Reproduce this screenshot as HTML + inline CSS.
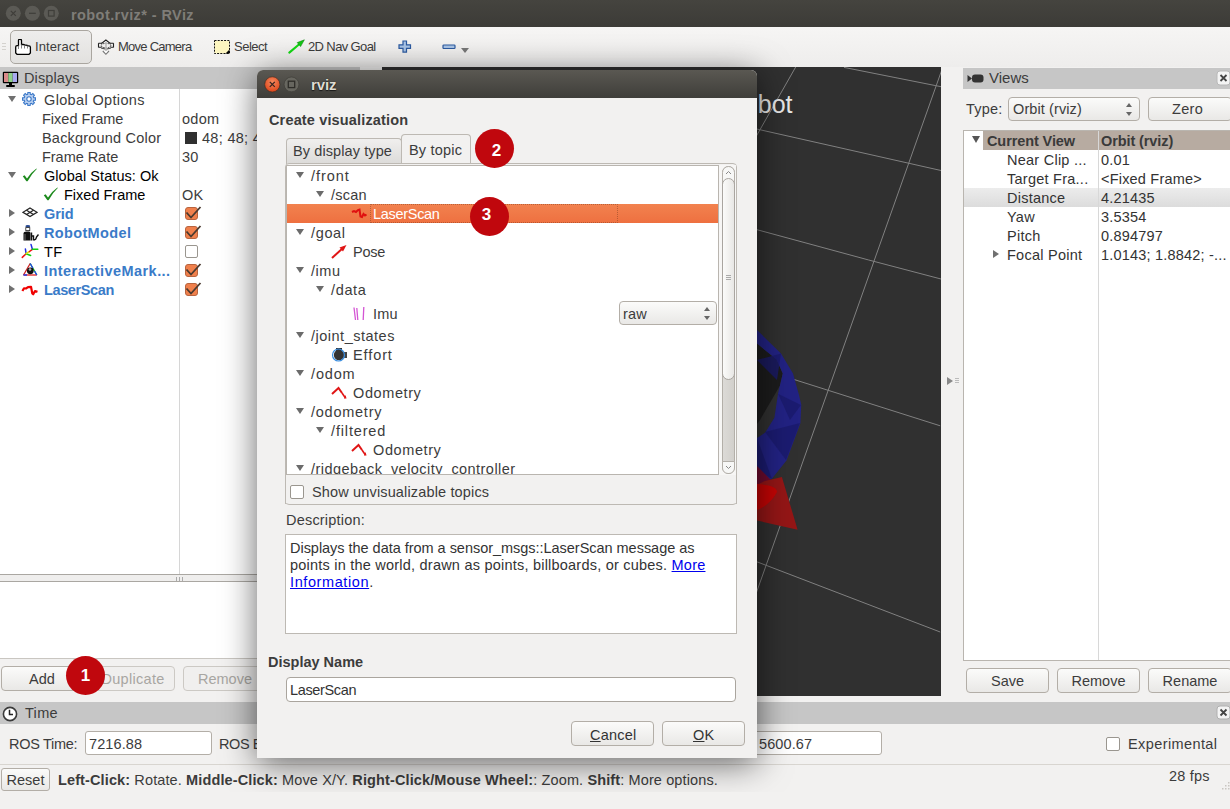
<!DOCTYPE html>
<html><head><meta charset="utf-8">
<style>
*{margin:0;padding:0;box-sizing:border-box}
html,body{width:1230px;height:809px;overflow:hidden;background:#f2f1f0;font-family:"Liberation Sans",sans-serif;font-size:13.5px;color:#3c3c3c;position:relative}
.a{position:absolute}
.t{position:absolute;white-space:nowrap;line-height:22px}
.b{font-weight:bold}
#titlebar{left:0;top:0;width:1230px;height:27px;background:linear-gradient(#45443f,#3c3b37)}
.wbtn{position:absolute;top:6px;width:15px;height:15px;border-radius:50%;background:#5f5e59}
#toolbar{left:0;top:27px;width:1230px;height:40px;background:linear-gradient(#f6f5f4,#eeedec)}
.phdr{background:#c6c6c6}
.tri{position:absolute;width:0;height:0;border-left:4px solid transparent;border-right:4px solid transparent;border-top:6px solid #707070}
.trir{position:absolute;width:0;height:0;border-top:4px solid transparent;border-bottom:4px solid transparent;border-left:6px solid #707070}
.btn{position:absolute;border:1px solid #b3aea7;border-radius:4px;background:linear-gradient(#fbfbfa,#e9e8e6);text-align:center;line-height:24px}
.inp{position:absolute;border:1px solid #b3aea7;border-radius:3px;background:#fff}
.cb{position:absolute;width:13px;height:13px;border:1px solid #9a968f;border-radius:2px;background:#fff}
.cbon{background:#f0804c;border-color:#b8643f;border-radius:3px}
.badge{position:absolute;width:39px;height:39px;border-radius:50%;background:#c0070d;color:#fff;font-size:17px;font-weight:bold;text-align:center;line-height:39px}
.blue{color:#2f76c4;font-weight:bold}
</style></head><body>

<!-- title bar -->
<div id="titlebar" class="a">
  <svg class="a" style="left:0;top:0" width="64" height="27" viewBox="0 0 64 27"><g fill="#5b5a55"><circle cx="13.3" cy="13.3" r="7.5"/><circle cx="32.4" cy="13.3" r="7.5"/><circle cx="51.3" cy="13.3" r="7.5"/></g><g stroke="#3f3e3a" stroke-width="1.2" fill="none"><path d="M10.8 10.8 L15.8 15.8 M15.8 10.8 L10.8 15.8"/><path d="M29 13.3 H35.8"/><rect x="48.5" y="10.5" width="5.6" height="5.6"/></g></svg>
  <div class="t b" style="left:71px;top:4px;color:#7f7d78;font-size:14.5px;letter-spacing:0.42px">robot.rviz* - RViz</div>
</div>

<!-- toolbar -->
<div id="toolbar" class="a">
  <div class="a" style="left:2px;top:16px;width:4px;height:1px;background:#d4d2ce;box-shadow:0 3px 0 #d4d2ce,0 6px 0 #d4d2ce"></div>
  <div class="a" style="left:10px;top:3px;width:82px;height:34px;border:1px solid #aaa6a0;border-radius:5px;background:linear-gradient(#eeedec,#e2e1df)"></div>
  <svg class="a" style="left:15px;top:12px" width="17" height="17" viewBox="0 0 17 17"><path d="M2 15.3 L0.7 14 V8 Q0.7 6.6 2 6.6 H3.5 V1.5 Q3.5 0.3 5 0.3 Q6.5 0.3 6.5 1.5 V5.5 H8 Q9.5 5.5 9.5 6.2 H11 Q12.5 6.2 12.5 6.8 H14 Q15.4 6.8 15.4 8.2 V14 L14 15.3 Z" fill="#fff" stroke="#000" stroke-width="1.3"/><path d="M6.5 5.5 V9.5 M9.5 6.2 V9.5 M12.5 6.8 V9.5 M3.5 6.6 V10" stroke="#777" stroke-width="0.9"/></svg>
  <div class="t" style="left:35px;top:9px;font-size:13px;letter-spacing:0.1px">Interact</div>
  <svg class="a" style="left:94px;top:9px" width="24" height="24" viewBox="94 36 24 24"><path d="M101.5 43.5 L105.9 40 L110.3 43.5" fill="#fff" stroke="#222" stroke-width="1.1"/><path d="M98.5 43.3 V47.5 M98.5 43.3 H102 M98.5 47.3 H101.5 M113.5 43.3 V47.5 M113.5 43.3 H110 M113.5 47.3 H110.5" stroke="#222" stroke-width="1.1" fill="none"/><ellipse cx="106" cy="45.6" rx="4.8" ry="2.3" fill="none" stroke="#333" stroke-width="1" stroke-dasharray="1.5 0.8"/><path d="M101 48 Q106 50.5 111 48" fill="none" stroke="#444" stroke-width="1"/><path d="M106 42 V51" stroke="#bbb" stroke-width="1.6"/><path d="M102.8 51 L105.9 54.3 L109 51" fill="#fff" stroke="#777" stroke-width="1.1"/></svg>
  <div class="t" style="left:118px;top:9px;font-size:13px;letter-spacing:-0.75px">Move Camera</div>
  <svg class="a" style="left:214px;top:13px" width="16" height="14" viewBox="0 0 16 14"><rect x="0.5" y="0.5" width="15" height="13" fill="#fdf6c0" stroke="#111" stroke-width="1" stroke-dasharray="2 1.2"/><path d="M15.5 9.5 V13.5 H11.5 Z" fill="#000"/></svg>
  <div class="t" style="left:234px;top:9px;font-size:13px;letter-spacing:-0.5px">Select</div>
  <svg class="a" style="left:288px;top:12px" width="17" height="15" viewBox="0 0 17 15"><path d="M1.3 13.6 L11.5 5" stroke="#14d814" stroke-width="2.1" stroke-linecap="round"/><path d="M16.4 0.8 L9.2 3.6 L12.6 7.6 Z" fill="#14c814" stroke="#0b7a0b" stroke-width="0.5"/></svg>
  <div class="t" style="left:308px;top:9px;font-size:13px;letter-spacing:-0.62px">2D Nav Goal</div>
  <svg class="a" style="left:398px;top:13px" width="14" height="13" viewBox="0 0 14 13"><path d="M5 1 h3.5 v3.8 h4 v3.5 h-4 v3.8 h-3.5 v-3.8 h-4 v-3.5 h4 z" fill="#a9c4e6" stroke="#2c5aa0" stroke-width="1.2"/></svg>
  <svg class="a" style="left:442px;top:17px" width="14" height="6" viewBox="0 0 14 6"><rect x="1" y="1" width="12" height="3.5" rx="0.8" fill="#a9c4e6" stroke="#2c5aa0" stroke-width="1.2"/></svg>
  <div class="a" style="left:461px;top:21px;width:0;height:0;border-left:4px solid transparent;border-right:4px solid transparent;border-top:5px solid #777"></div>
</div>

<!-- displays panel -->
<div class="a phdr" style="left:0;top:67px;width:360px;height:22px"></div>
<div class="a" style="left:0;top:89px;width:360px;height:486px;background:#fff"></div>
<div class="a" style="left:179px;top:89px;width:1px;height:486px;background:#d6d6d6"></div>
<svg class="a" style="left:2px;top:71px" width="17" height="17" viewBox="0 0 17 17"><rect x="0.8" y="0.8" width="15.4" height="11.4" rx="1" fill="#000"/><rect x="2" y="2" width="4.3" height="9" fill="#d98a8a"/><rect x="6.3" y="2" width="4.4" height="9" fill="#8fd08a"/><rect x="10.7" y="2" width="4.3" height="9" fill="#a9a9f0"/><rect x="7" y="12" width="3" height="2" fill="#000"/><rect x="4" y="14" width="9" height="2" rx="1" fill="#000"/></svg>
<div class="t" style="left:24px;top:67px;font-size:14.5px;letter-spacing:0.1px;color:#3c3c3c">Displays</div>
<div class="tri" style="left:8px;top:96px"></div>
<svg class="a" style="left:22px;top:92px" width="14" height="14" viewBox="0 0 14 14"><path d="M11.72 5.69 L13.50 5.87 L13.50 8.13 L11.72 8.31 L11.26 9.42 L12.40 10.80 L10.80 12.40 L9.42 11.26 L8.31 11.72 L8.13 13.50 L5.87 13.50 L5.69 11.72 L4.58 11.26 L3.20 12.40 L1.60 10.80 L2.74 9.42 L2.28 8.31 L0.50 8.13 L0.50 5.87 L2.28 5.69 L2.74 4.58 L1.60 3.20 L3.20 1.60 L4.58 2.74 L5.69 2.28 L5.87 0.50 L8.13 0.50 L8.31 2.28 L9.42 2.74 L10.80 1.60 L12.40 3.20 L11.26 4.58 Z" fill="#b9d0f0" stroke="#3b78c8" stroke-width="1.1"/><circle cx="7" cy="7" r="2.2" fill="#fff" stroke="#3b78c8" stroke-width="1.1"/></svg>
<div class="t" style="left:44px;top:89px;font-size:14.5px;letter-spacing:0.35px">Global Options</div>
<div class="t" style="left:42px;top:108px;font-size:14.5px;letter-spacing:0.0px">Fixed Frame</div>
<div class="t" style="left:42px;top:127px;font-size:14.5px;letter-spacing:0.2px">Background Color</div>
<div class="t" style="left:42px;top:146px;font-size:14.5px;letter-spacing:-0.04px">Frame Rate</div>
<div class="tri" style="left:8px;top:172px"></div>
<svg class="a" style="left:22px;top:168px" width="15" height="14" viewBox="0 0 15 14"><path d="M0.8 8.2 L2.6 7.2 L5 10.6 Q8.8 4.2 14.4 0.4 L14.8 1 Q9.8 5.5 5.6 13.2 L4.4 13.2 Z" fill="#1d8a1d"/></svg>
<div class="t" style="left:44px;top:165px;font-size:14.5px;color:#000;letter-spacing:0.06px">Global Status: Ok</div>
<svg class="a" style="left:43px;top:187px" width="15" height="14" viewBox="0 0 15 14"><path d="M0.8 8.2 L2.6 7.2 L5 10.6 Q8.8 4.2 14.4 0.4 L14.8 1 Q9.8 5.5 5.6 13.2 L4.4 13.2 Z" fill="#1d8a1d"/></svg>
<div class="t" style="left:64px;top:184px;font-size:14.5px;color:#000;letter-spacing:0.0px">Fixed Frame</div>
<div class="t" style="left:182px;top:108px;font-size:14.5px;letter-spacing:0.3px">odom</div>
<div class="a" style="left:185px;top:132px;width:12px;height:12px;background:#303030"></div>
<div class="t" style="left:202px;top:127px;font-size:14.5px;letter-spacing:0.3px">48; 48; 48</div>
<div class="t" style="left:182px;top:146px;font-size:14.5px;letter-spacing:0.3px">30</div>
<div class="t" style="left:182px;top:184px;font-size:14.5px;letter-spacing:0.3px">OK</div>
<div class="trir" style="left:9px;top:209px"></div>
<div class="trir" style="left:9px;top:228px"></div>
<div class="trir" style="left:9px;top:247px"></div>
<div class="trir" style="left:9px;top:266px"></div>
<div class="trir" style="left:9px;top:285px"></div>
<svg class="a" style="left:22px;top:207px" width="16" height="11" viewBox="0 0 16 11"><g fill="none" stroke="#222" stroke-width="1.2"><path d="M8 1 L15 5.3 L8 9.6 L1 5.3 Z"/><path d="M4.5 3.15 L11.5 7.45 M11.5 3.15 L4.5 7.45"/></g></svg>
<svg class="a" style="left:22px;top:224px" width="17" height="17" viewBox="22 224 17 17"><ellipse cx="27.8" cy="226.3" rx="2.4" ry="1.4" fill="#2a4a90"/><rect x="25.8" y="227.6" width="4" height="3" fill="#fff" stroke="#222" stroke-width="0.8"/><path d="M23.5 240.5 V233.5 Q23.5 231.5 26.5 231.5 H29 Q30.5 231.5 30.5 233.5 V240.5 Z" fill="#111"/><path d="M25 234 V240" stroke="#888" stroke-width="0.8"/><path d="M31.5 240.5 V232.5 M31.5 236 H33.5 V240.5 M34 240 Q36 240 36.5 237 L38.5 234.5" fill="none" stroke="#111" stroke-width="1.4"/></svg>



<svg class="a" style="left:18px;top:240px" width="24" height="60" viewBox="18 240 24 60">
<g stroke-width="1.5" fill="none" stroke-linecap="round">
<path d="M26.1 253.7 L25.4 249" stroke="#2030e0"/><path d="M26.1 253.7 L22.3 257.4" stroke="#f01010"/><path d="M26.1 253.7 L30.6 255.5" stroke="#10d010"/>
<path d="M26.1 253.7 L29.5 251.5" stroke="#e0e010"/><path d="M29.5 251.5 L32.4 249.3" stroke="#f01010"/>
<path d="M32.4 249.3 L31 244.4" stroke="#2030e0"/><path d="M32.4 249.3 L37.8 249.3" stroke="#10d010"/>
</g>
<g stroke-width="1.3" fill="none">
<path d="M30.2 263.5 L23.5 275" stroke="#d02020"/><path d="M30.2 263.5 L36.8 275" stroke="#10c010"/><path d="M23.5 275 L36.8 275" stroke="#e02020"/>
<path d="M30.2 263.5 L33 268.5 M23.5 275 L27 275 M36.8 275 L34.5 271" stroke="#2040f0"/>
</g>
<circle cx="30.3" cy="270.8" r="3.4" fill="#111"/><circle cx="30" cy="269.5" r="1.3" fill="#aaa"/>
<path d="M22.4 291 L24 288.3 L26 288.5 L28 287.2 L31 286.8 L32.3 293.5 L33.2 294.3 L35 291 L37.5 291.8" fill="none" stroke="#f00000" stroke-width="2.2" stroke-linejoin="round"/>
</svg>
<div class="t" style="left:44px;top:203px;font-size:14.5px;color:#3a7bc8;font-weight:bold;letter-spacing:-0.1px">Grid</div>
<div class="t" style="left:44px;top:222px;font-size:14.5px;color:#3a7bc8;font-weight:bold;letter-spacing:0.35px">RobotModel</div>
<div class="t" style="left:44px;top:241px;font-size:14.5px;color:#000;letter-spacing:0.3px">TF</div>
<div class="t" style="left:44px;top:260px;font-size:14.5px;color:#3a7bc8;font-weight:bold;letter-spacing:0.45px">InteractiveMark...</div>
<div class="t" style="left:44px;top:279px;font-size:14.5px;color:#3a7bc8;font-weight:bold;letter-spacing:-0.38px">LaserScan</div>
<div class="cb cbon" style="left:185px;top:207px"></div><svg class="a" style="left:185px;top:206px" width="17" height="14" viewBox="0 0 17 14"><path d="M1.5 6.5 L6 11.5 L15.5 1" fill="none" stroke="#4a3a30" stroke-width="1.8"/></svg>
<div class="cb cbon" style="left:185px;top:226px"></div><svg class="a" style="left:185px;top:225px" width="17" height="14" viewBox="0 0 17 14"><path d="M1.5 6.5 L6 11.5 L15.5 1" fill="none" stroke="#4a3a30" stroke-width="1.8"/></svg>
<div class="cb cbon" style="left:185px;top:264px"></div><svg class="a" style="left:185px;top:263px" width="17" height="14" viewBox="0 0 17 14"><path d="M1.5 6.5 L6 11.5 L15.5 1" fill="none" stroke="#4a3a30" stroke-width="1.8"/></svg>
<div class="cb cbon" style="left:185px;top:283px"></div><svg class="a" style="left:185px;top:282px" width="17" height="14" viewBox="0 0 17 14"><path d="M1.5 6.5 L6 11.5 L15.5 1" fill="none" stroke="#4a3a30" stroke-width="1.8"/></svg>
<div class="cb" style="left:185px;top:245px"></div>

<div class="a" style="left:0;top:574px;width:360px;height:8px;background:#efeeed;border-top:1px solid #aaa7a2;border-bottom:1px solid #aaa7a2"></div>
<div class="a" style="left:0;top:582px;width:360px;height:77px;background:#fff;border-bottom:1px solid #c9c6c1"></div>

<!-- 3D view -->
<div class="a" style="left:382px;top:67px;width:559px;height:629px;background:#303030;overflow:hidden">
<svg width="559" height="629" viewBox="382 67 559 629" style="position:absolute;left:0;top:0">
<g stroke="#8a8a8a" stroke-width="1" fill="none" opacity="0.9">
<path d="M844 67.4 L941 86.7"/>
<path d="M570 87 L941 170.5"/>
<path d="M500 160 L868.7 260 L941 279"/>
<path d="M783 376 L940.2 425.8"/>
<path d="M700 540 L940.2 632"/>
<path d="M795.7 67 L700 235"/>
<path d="M962 13 L757.7 589 L720 695"/>
</g>
<path d="M757 343.6 L776.6 359.6 L782.7 373.4 L780 385.5 L760 420 L745 440 L745 350 Z" fill="#1c1c1c"/>
<path d="M745 330 L757 330 L781 353.5 L793 373.4 L799 395 L801.3 404.8 L800.4 423.3 L786.5 460.4 L771.7 478.9 L757 482 L745 482 L745 438 L757 438 L765.2 432.6 L774.4 417.8 L778 393.7 L782.7 373.4 L776.6 359.6 L757 343.6 L745 343.6 Z" fill="#222283"/>
<path d="M757 360 L781 353.5 L777 380 Z M778 393.7 L801 405 L790 420 Z M765 432 L800 423 L786 460 Z M757 438 L772 479 L757 470 Z" fill="#1a1a6c" opacity="0.8"/>
<path d="M745 466 L757 466 L771.7 480.7 L757 495 L745 495 Z" fill="#6e0b2e"/>
<path d="M781.9 477 L797.6 529.8 L757 520.5 L745 520 L745 490 L765 481 Z" fill="#941616"/>
<path d="M745 484 L757 484 Q777 485 777 492 Q770 505 757 510 L745 510 Z" fill="#c40404"/>
<text x="792.5" y="113" text-anchor="end" font-family="Liberation Sans" font-size="25" fill="#e8e8e8">bot</text>
</svg>
</div>

<!-- views panel -->
<div class="a phdr" style="left:963px;top:68px;width:267px;height:21px"></div>
<svg class="a" style="left:967px;top:74px" width="17" height="9" viewBox="0 0 17 9"><path d="M0.5 1 L5 4.5 L0.5 8 Z" fill="#333"/><rect x="5" y="0.5" width="11.5" height="8" rx="3" fill="#333"/></svg>
<div class="t" style="left:989px;top:67px;font-size:15px;color:#3c3c3c">Views</div>
<svg class="a" style="left:1216px;top:70px" width="14" height="16" viewBox="0 0 14 16"><rect x="1" y="1" width="13" height="14" rx="3" fill="#f4f4f4" stroke="#b8b8b8"/><path d="M4.5 5 L10.5 11 M10.5 5 L4.5 11" stroke="#444" stroke-width="1.8"/></svg>
<div class="t" style="left:966px;top:98px;font-size:14.5px;letter-spacing:0.2px">Type:</div>
<div class="btn" style="left:1008px;top:97px;width:132px;height:24px;border-radius:4px"></div>
<div class="t" style="left:1013px;top:98px;font-size:14.5px;letter-spacing:0.1px">Orbit (rviz)</div>
<div class="a" style="left:1126px;top:103px;width:0;height:0;border-left:3px solid transparent;border-right:3px solid transparent;border-bottom:4px solid #666"></div>
<div class="a" style="left:1126px;top:112px;width:0;height:0;border-left:3px solid transparent;border-right:3px solid transparent;border-top:4px solid #666"></div>
<div class="btn" style="left:1148px;top:97px;width:84px;height:24px;border-radius:4px"></div>
<div class="t" style="left:1172px;top:98px;font-size:14.5px;letter-spacing:0.3px">Zero</div>
<div class="a" style="left:963px;top:130px;width:269px;height:531px;background:#fff;border:1px solid #b9b5af"></div>
<div class="a" style="left:983px;top:131px;width:247px;height:19px;background:#b7aba1"></div>
<div class="a" style="left:964px;top:188px;width:266px;height:19px;background:linear-gradient(#ececec,#dcdcdc)"></div>
<div class="a" style="left:1098px;top:131px;width:1px;height:529px;background:#d8d8d8"></div>
<div class="tri" style="left:972px;top:136px;border-left-width:4px;border-right-width:4px;border-top-width:7px;border-top-color:#555"></div>
<div class="t" style="left:987px;top:130px;font-size:14.5px;font-weight:bold;color:#3a3a3a;letter-spacing:-0.1px">Current View</div>
<div class="t" style="left:1101px;top:130px;font-size:14.5px;font-weight:bold;color:#3a3a3a;letter-spacing:-0.1px">Orbit (rviz)</div>
<div class="t" style="left:1007px;top:149px;font-size:14.5px;letter-spacing:0.25px;color:#333">Near Clip ...</div>
<div class="t" style="left:1101px;top:149px;font-size:14.5px;letter-spacing:0.2px;color:#333">0.01</div>
<div class="t" style="left:1007px;top:168px;font-size:14.5px;letter-spacing:0.25px;color:#333">Target Fra...</div>
<div class="t" style="left:1101px;top:168px;font-size:14.5px;letter-spacing:0.2px;color:#333">&lt;Fixed Frame&gt;</div>
<div class="t" style="left:1007px;top:187px;font-size:14.5px;letter-spacing:0.25px;color:#333">Distance</div>
<div class="t" style="left:1101px;top:187px;font-size:14.5px;letter-spacing:0.2px;color:#333">4.21435</div>
<div class="t" style="left:1007px;top:206px;font-size:14.5px;letter-spacing:0.25px;color:#333">Yaw</div>
<div class="t" style="left:1101px;top:206px;font-size:14.5px;letter-spacing:0.2px;color:#333">3.5354</div>
<div class="t" style="left:1007px;top:225px;font-size:14.5px;letter-spacing:0.25px;color:#333">Pitch</div>
<div class="t" style="left:1101px;top:225px;font-size:14.5px;letter-spacing:0.2px;color:#333">0.894797</div>
<div class="t" style="left:1007px;top:244px;font-size:14.5px;letter-spacing:0.25px;color:#333">Focal Point</div>
<div class="t" style="left:1101px;top:244px;font-size:14.5px;letter-spacing:0.2px;color:#333">1.0143; 1.8842; -...</div>
<div class="trir" style="left:993px;top:250px"></div>
<div class="btn" style="left:966px;top:668px;width:83px;height:25px;font-size:14.5px">Save</div>
<div class="btn" style="left:1057px;top:668px;width:83px;height:25px;font-size:14.5px">Remove</div>
<div class="btn" style="left:1148px;top:668px;width:84px;height:25px;font-size:14.5px">Rename</div>
<div class="trir" style="left:947px;top:377px;border-left-color:#888"></div>
<div class="a" style="left:955px;top:378px;width:4px;height:1px;background:#bbb;box-shadow:0 2px 0 #bbb,0 4px 0 #bbb"></div>


<!-- displays buttons -->
<div class="a" style="left:176px;top:577px;width:1px;height:4px;background:#aaa;box-shadow:3px 0 0 #aaa,6px 0 0 #aaa"></div>
<div class="btn" style="left:1px;top:666px;width:82px;height:25px;color:#3c3c3c;font-size:14.5px">Add</div>
<div class="btn" style="left:91px;top:666px;width:84px;height:25px;color:#a8a6a2;border-color:#ccc9c4;background:#f0efee;font-size:14.5px;letter-spacing:0.3px">Duplicate</div>
<div class="btn" style="left:183px;top:666px;width:84px;height:25px;color:#a8a6a2;border-color:#ccc9c4;background:#f0efee;font-size:14.5px">Remove</div>

<!-- time panel -->
<div class="a phdr" style="left:0;top:702px;width:1230px;height:22px"></div>
<svg class="a" style="left:2px;top:706px" width="16" height="16" viewBox="0 0 16 16"><circle cx="8" cy="8" r="6.6" fill="#fff" stroke="#3a3a3a" stroke-width="1.6"/><path d="M7.5 3.8 V8.5 H11" fill="none" stroke="#222" stroke-width="1.5"/></svg>
<div class="t" style="left:25px;top:702px;font-size:14.5px;letter-spacing:0.3px;color:#3c3c3c">Time</div>
<div class="t" style="left:9px;top:733px;font-size:14.5px;letter-spacing:-0.3px">ROS Time:</div>
<div class="inp" style="left:85px;top:731px;width:127px;height:24px"></div>
<div class="t" style="left:89px;top:733px;font-size:14.5px;letter-spacing:0.1px">7216.88</div>
<div class="t" style="left:219px;top:733px;font-size:14.5px;letter-spacing:-0.4px">ROS Elapsed:</div>
<div class="inp" style="left:754px;top:731px;width:128px;height:24px"></div>
<div class="t" style="left:759px;top:733px;font-size:14.5px;letter-spacing:0.1px">5600.67</div>
<div class="cb" style="left:1106px;top:737px;width:14px;height:14px"></div>
<div class="t" style="left:1128px;top:733px;font-size:14.5px;letter-spacing:0.4px">Experimental</div>
<svg class="a" style="left:1216px;top:705px" width="14" height="15" viewBox="0 0 14 15"><rect x="1" y="1" width="13" height="13" rx="3" fill="#f4f4f4" stroke="#b0b0b0"/><path d="M4.5 4.5 L10.5 10.5 M10.5 4.5 L4.5 10.5" stroke="#444" stroke-width="1.8"/></svg>
<div class="a" style="left:0;top:764px;width:1230px;height:1px;background:#d8d5d0"></div>
<div class="btn" style="left:1px;top:768px;width:49px;height:23px;font-size:14.5px;line-height:22px;border-radius:3px">Reset</div>
<div class="t" style="left:58px;top:769px;font-size:14.5px;letter-spacing:0.12px"><b>Left-Click:</b> Rotate. <b>Middle-Click:</b> Move X/Y. <b>Right-Click/Mouse Wheel:</b>: Zoom. <b>Shift</b>: More options.</div>
<div class="t" style="left:1169px;top:765px;font-size:14.5px;letter-spacing:0.2px">28 fps</div>

<!-- dialog -->
<div class="a" style="left:257px;top:70px;width:500px;height:688px;background:#f2f1f0;border-radius:6px 6px 0 0;box-shadow:0 5px 34px rgba(0,0,0,0.6)">
  <div class="a" style="left:0;top:0;width:500px;height:28px;border-radius:6px 6px 0 0;background:linear-gradient(#5a5852,#3f3e3a)"></div>
  <svg class="a" style="left:7px;top:6px" width="45" height="17" viewBox="0 0 45 17"><defs><radialGradient id="rg" cx="50%" cy="35%" r="60%"><stop offset="0" stop-color="#f58a60"/><stop offset="1" stop-color="#df4b1f"/></radialGradient></defs><circle cx="8.3" cy="8.4" r="7.6" fill="url(#rg)" stroke="#3a2a20" stroke-width="0.6"/><path d="M5.8 5.9 L10.8 10.9 M10.8 5.9 L5.8 10.9" stroke="#3a2520" stroke-width="1.3"/><circle cx="27.5" cy="8.4" r="7.4" fill="#67665f" stroke="#3a3934" stroke-width="0.6"/><rect x="24.3" y="5.2" width="6.4" height="6.4" fill="none" stroke="#2e2d29" stroke-width="1.3"/></svg>
<div class="t" style="left:54px;top:4px;font-size:15px;font-weight:bold;color:#dfdbd2;letter-spacing:-0.1px;text-shadow:0 0 1px #1a1a1a,0 1px 1px #1a1a1a">rviz</div>
<div class="t" style="left:12px;top:40px;font-size:14.5px;font-weight:bold;color:#3c3c3c;letter-spacing:0.15px;margin-top:-1px">Create visualization</div>
<div class="a" style="left:29px;top:68px;width:116px;height:26px;border:1px solid #bdb9b3;border-bottom:none;border-radius:4px 4px 0 0;background:linear-gradient(#f0efee,#dcdbd9)"></div>
<div class="a" style="left:144px;top:64px;width:70px;height:31px;border:1px solid #bdb9b3;border-bottom:none;border-radius:4px 4px 0 0;background:#f2f1f0"></div>
<div class="t" style="left:36px;top:70px;font-size:14.5px;color:#3c3c3c;letter-spacing:0.1px">By display type</div>
<div class="t" style="left:152px;top:69px;font-size:14.5px;color:#3c3c3c;letter-spacing:0.2px">By topic</div>
<div class="a" style="left:28px;top:93px;width:452px;height:342px;border:1px solid #bdb9b3;border-radius:4px;background:#f2f1f0"></div>
<div class="a" style="left:29px;top:95px;width:433px;height:310px;border:1px solid #b9b5af;background:#fff"></div>
<div class="a" style="left:462px;top:95px;width:17px;height:310px;background:#f7f6f5"></div>
<div class="a" style="left:465px;top:96px;width:13px;height:308px;border:1px solid #b3afa9;border-radius:7px;background:linear-gradient(90deg,#dcdad7,#d2d0cc)"></div>
<div class="a" style="left:465px;top:96px;width:13px;height:16px;border:1px solid #b3afa9;border-radius:7px 7px 0 0;background:#f7f7f6"></div>
<div class="a" style="left:465px;top:108px;width:13px;height:202px;border:1px solid #a9a5a0;border-radius:7px;background:linear-gradient(90deg,#fbfbfa,#e8e7e5)"></div>
<div class="a" style="left:465px;top:391px;width:13px;height:13px;border:1px solid #b3afa9;border-radius:0 0 6px 6px;background:#f7f7f6"></div>
<svg class="a" style="left:468px;top:100px" width="7" height="5" viewBox="0 0 7 5"><path d="M1 4 L3.5 1.5 L6 4" fill="none" stroke="#888" stroke-width="1"/></svg>
<svg class="a" style="left:468px;top:395px" width="7" height="5" viewBox="0 0 7 5"><path d="M1 1 L3.5 3.5 L6 1" fill="none" stroke="#888" stroke-width="1"/></svg>
<div class="a" style="left:469px;top:205px;width:5px;height:1px;background:#aaa;box-shadow:0 2px 0 #aaa,0 4px 0 #aaa"></div>
<div class="a" style="left:30px;top:134px;width:431px;height:19px;background:linear-gradient(#f2824f,#ee7040)"></div>
<div class="a" style="left:113px;top:134px;width:248px;height:19px;border:1px dotted rgba(120,60,30,0.45)"></div>
<div class="a" style="left:39px;top:102px;width:0px;height:0px;border-left:4px solid transparent;border-right:4px solid transparent;border-top:6px solid #6b6b6b"></div>
<div class="t" style="left:54px;top:95px;font-size:14.5px;color:#3c3c3c;letter-spacing:0.95px">/front</div>
<div class="a" style="left:59px;top:121px;width:0px;height:0px;border-left:4px solid transparent;border-right:4px solid transparent;border-top:6px solid #6b6b6b"></div>
<div class="t" style="left:74px;top:114px;font-size:14.5px;color:#3c3c3c;letter-spacing:0.25px">/scan</div>
<div class="t" style="left:116px;top:133px;font-size:14.5px;color:#fff;letter-spacing:-0.3px">LaserScan</div>
<svg class="a" style="left:94px;top:138px" width="17" height="11" viewBox="0 0 17 11"><path d="M1 4 L3 3 L5 4 L7 2 L8.5 1.5 L9.5 8.5 L11 9 L12.5 6 L14 7.5 L15.5 6.5" fill="none" stroke="#e01010" stroke-width="2"/></svg>
<div class="a" style="left:39px;top:159px;width:0px;height:0px;border-left:4px solid transparent;border-right:4px solid transparent;border-top:6px solid #6b6b6b"></div>
<div class="t" style="left:54px;top:152px;font-size:14.5px;color:#3c3c3c;letter-spacing:0.65px">/goal</div>
<div class="t" style="left:96px;top:171px;font-size:14.5px;color:#3c3c3c;letter-spacing:-0.25px">Pose</div>
<svg class="a" style="left:74px;top:174px" width="16" height="15" viewBox="0 0 16 15"><path d="M1 14 L12 4" stroke="#e01515" stroke-width="2"/><path d="M15.5 1 L8.5 3.5 L12 7.5 Z" fill="#e01515"/></svg>
<div class="a" style="left:39px;top:197px;width:0px;height:0px;border-left:4px solid transparent;border-right:4px solid transparent;border-top:6px solid #6b6b6b"></div>
<div class="t" style="left:54px;top:190px;font-size:14.5px;color:#3c3c3c;letter-spacing:0.55px">/imu</div>
<div class="a" style="left:59px;top:216px;width:0px;height:0px;border-left:4px solid transparent;border-right:4px solid transparent;border-top:6px solid #6b6b6b"></div>
<div class="t" style="left:74px;top:209px;font-size:14.5px;color:#3c3c3c;letter-spacing:0.65px">/data</div>
<div class="t" style="left:116px;top:233px;font-size:14.5px;color:#3c3c3c;letter-spacing:0.25px">Imu</div>
<svg class="a" style="left:96px;top:236px" width="13" height="15" viewBox="0 0 13 15"><path d="M1 1.5 L2.5 14 M3.8 2 L4.8 14 M10.8 1 L10.2 14" stroke="#d455d4" stroke-width="1.3" fill="none"/></svg>
<div class="a" style="left:39px;top:262px;width:0px;height:0px;border-left:4px solid transparent;border-right:4px solid transparent;border-top:6px solid #6b6b6b"></div>
<div class="t" style="left:54px;top:255px;font-size:14.5px;color:#3c3c3c;letter-spacing:0.5px">/joint_states</div>
<div class="t" style="left:96px;top:274px;font-size:14.5px;color:#3c3c3c;letter-spacing:0.9px">Effort</div>
<svg class="a" style="left:74px;top:276px" width="17" height="17" viewBox="0 0 17 17"><rect x="5" y="2" width="6" height="3" fill="#333"/><circle cx="8" cy="9" r="5.2" fill="#333"/><rect x="12" y="6" width="4" height="6" fill="#444"/><circle cx="7.5" cy="9" r="6" fill="none" stroke="#3a8ee0" stroke-width="1.2"/></svg>
<div class="a" style="left:39px;top:300px;width:0px;height:0px;border-left:4px solid transparent;border-right:4px solid transparent;border-top:6px solid #6b6b6b"></div>
<div class="t" style="left:54px;top:293px;font-size:14.5px;color:#3c3c3c;letter-spacing:0.85px">/odom</div>
<div class="t" style="left:96px;top:312px;font-size:14.5px;color:#3c3c3c;letter-spacing:0.6px">Odometry</div>
<svg class="a" style="left:74px;top:316px" width="17" height="13" viewBox="0 0 17 13"><path d="M1 8 L7.5 2 L11 7" stroke="#e01515" stroke-width="2" fill="none"/><path d="M11 7 L14.5 12" stroke="#e01515" stroke-width="1.6"/><path d="M13 12.5 L15.5 12.5 L14.5 9 Z" fill="#e01515"/></svg>
<div class="a" style="left:39px;top:338px;width:0px;height:0px;border-left:4px solid transparent;border-right:4px solid transparent;border-top:6px solid #6b6b6b"></div>
<div class="t" style="left:54px;top:331px;font-size:14.5px;color:#3c3c3c;letter-spacing:0.75px">/odometry</div>
<div class="a" style="left:59px;top:357px;width:0px;height:0px;border-left:4px solid transparent;border-right:4px solid transparent;border-top:6px solid #6b6b6b"></div>
<div class="t" style="left:74px;top:350px;font-size:14.5px;color:#3c3c3c;letter-spacing:0.85px">/filtered</div>
<div class="t" style="left:116px;top:369px;font-size:14.5px;color:#3c3c3c;letter-spacing:0.6px">Odometry</div>
<svg class="a" style="left:94px;top:373px" width="17" height="13" viewBox="0 0 17 13"><path d="M1 8 L7.5 2 L11 7" stroke="#e01515" stroke-width="2" fill="none"/><path d="M11 7 L14.5 12" stroke="#e01515" stroke-width="1.6"/><path d="M13 12.5 L15.5 12.5 L14.5 9 Z" fill="#e01515"/></svg>
<div class="a" style="left:39px;top:395px;width:0px;height:0px;border-left:4px solid transparent;border-right:4px solid transparent;border-top:6px solid #6b6b6b"></div>
<div class="t" style="left:54px;top:388px;font-size:14.5px;color:#3c3c3c;letter-spacing:0.45px">/ridgeback_velocity_controller</div>
<div class="a" style="left:362px;top:231px;width:98px;height:24px;border:1px solid #b3aea7;border-radius:4px;background:linear-gradient(#fbfbfa,#e9e8e6)"></div>
<div class="t" style="left:366px;top:233px;font-size:14.5px;color:#3c3c3c;letter-spacing:0.2px">raw</div>
<div class="a" style="left:447px;top:237px;width:0px;height:0px;border-left:3px solid transparent;border-right:3px solid transparent;border-bottom:4px solid #666"></div>
<div class="a" style="left:447px;top:246px;width:0px;height:0px;border-left:3px solid transparent;border-right:3px solid transparent;border-top:4px solid #666"></div>
<div class="a" style="left:29px;top:405px;width:450px;height:28px;background:#f2f1f0"></div>
<div class="a" style="left:28px;top:405px;width:1px;height:29px;background:#bdb9b3"></div>
<div class="a" style="left:479px;top:405px;width:1px;height:29px;background:#bdb9b3"></div>
<div class="a" style="left:29px;top:404px;width:433px;height:1px;background:#b9b5af"></div>
<div class="a" style="left:33px;top:415px;width:14px;height:14px;border:1px solid #9a968f;border-radius:2px;background:#fff"></div>
<div class="t" style="left:55px;top:411px;font-size:14.5px;color:#3c3c3c;letter-spacing:0.15px">Show unvisualizable topics</div>
<div class="t" style="left:29px;top:439px;font-size:14.5px;color:#3c3c3c;letter-spacing:0.2px">Description:</div>
<div class="a" style="left:28px;top:464px;width:452px;height:100px;border:1px solid #bdb9b3;background:#fff"></div>
<div class="t" style="left:33px;top:467px;font-size:14.5px;color:#333;letter-spacing:-0.03px">Displays the data from a sensor_msgs::LaserScan message as</div>
<div class="t" style="left:33px;top:484px;font-size:14.5px;color:#333;letter-spacing:0.22px">points in the world, drawn as points, billboards, or cubes. <span style="color:#0000ee;text-decoration:underline">More</span></div>
<div class="t" style="left:33px;top:501px;font-size:14.5px;color:#333;letter-spacing:0.6px"><span style="color:#0000ee;text-decoration:underline">Information</span>.</div>
<div class="t" style="left:11px;top:581px;font-size:14.5px;font-weight:bold;color:#3c3c3c;letter-spacing:0.0px">Display Name</div>
<div class="a" style="left:29px;top:607px;width:450px;height:25px;border:1px solid #aaa59e;border-radius:4px;background:#fff"></div>
<div class="t" style="left:33px;top:609px;font-size:14.5px;color:#333;letter-spacing:-0.35px">LaserScan</div>
<div class="a" style="left:314px;top:651px;width:83px;height:25px;border:1px solid #b3aea7;border-radius:4px;background:linear-gradient(#fbfbfa,#e9e8e6)"></div>
<div class="a" style="left:405px;top:651px;width:83px;height:25px;border:1px solid #b3aea7;border-radius:4px;background:linear-gradient(#fbfbfa,#e9e8e6)"></div>
<div class="t" style="left:333px;top:654px;font-size:14.5px;color:#333;letter-spacing:0.2px"><u>C</u>ancel</div>
<div class="t" style="left:436px;top:654px;font-size:14.5px;color:#333;letter-spacing:0.2px"><u>O</u>K</div>
</div>

<div class="badge" style="left:66px;top:656px"><span style="position:absolute;left:0;top:0;width:39px">1</span></div>
<div class="badge" style="left:475px;top:129px"><span style="position:absolute;left:2px;top:2px;width:39px">2</span></div>
<div class="badge" style="left:470px;top:197px"><span style="position:absolute;left:-3px;top:-2px;width:39px">3</span></div>
<div class="a" style="left:0;top:792px;width:1230px;height:17px;background:#f2f1f0"></div>
<svg class="a" style="left:1218px;top:780px" width="13" height="13" viewBox="0 0 13 13"><g fill="#c9c6c1"><rect x="10" y="2" width="1.5" height="1.5"/><rect x="7" y="5" width="1.5" height="1.5"/><rect x="10" y="5" width="1.5" height="1.5"/><rect x="4" y="8" width="1.5" height="1.5"/><rect x="7" y="8" width="1.5" height="1.5"/><rect x="10" y="8" width="1.5" height="1.5"/></g></svg>
</body></html>
